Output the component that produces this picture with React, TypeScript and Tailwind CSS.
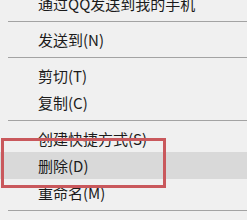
import React from 'react';

type Item = { label: string; active?: boolean } | 'sep';

const items: Item[] = [
  { label: '通过QQ发送到我的手机' },
  'sep',
  { label: '发送到(N)' },
  'sep',
  { label: '剪切(T)' },
  { label: '复制(C)' },
  'sep',
  { label: '创建快捷方式(S)' },
  { label: '删除(D)', active: true },
  { label: '重命名(M)' },
  'sep',
];

export default function App() {
  return (
    <div className="relative h-[220px] w-[247px] overflow-hidden bg-[#f0f0f0] font-['Noto_Sans_CJK_SC','Noto_Sans',sans-serif] text-[15px] text-[#1b1b1b]">
      <div className="-mt-[10px] flex flex-col">
        {items.map((it, i) =>
          it === 'sep' ? (
            <div key={i} className="my-[4px] ml-[8px] h-px bg-[#a3a3a3]" />
          ) : (
            <div
              key={i}
              className={`flex h-[27px] items-center pl-[38px] leading-none ${it.active ? 'bg-[#d9d9d9]' : ''}`}
            >
              {it.label}
            </div>
          )
        )}
      </div>
      {/* annotation box drawn over the menu */}
      <div className="pointer-events-none absolute left-[1px] top-[138px] h-[50px] w-[165px] border-[3px] border-[#c9585c]" />
    </div>
  );
}
